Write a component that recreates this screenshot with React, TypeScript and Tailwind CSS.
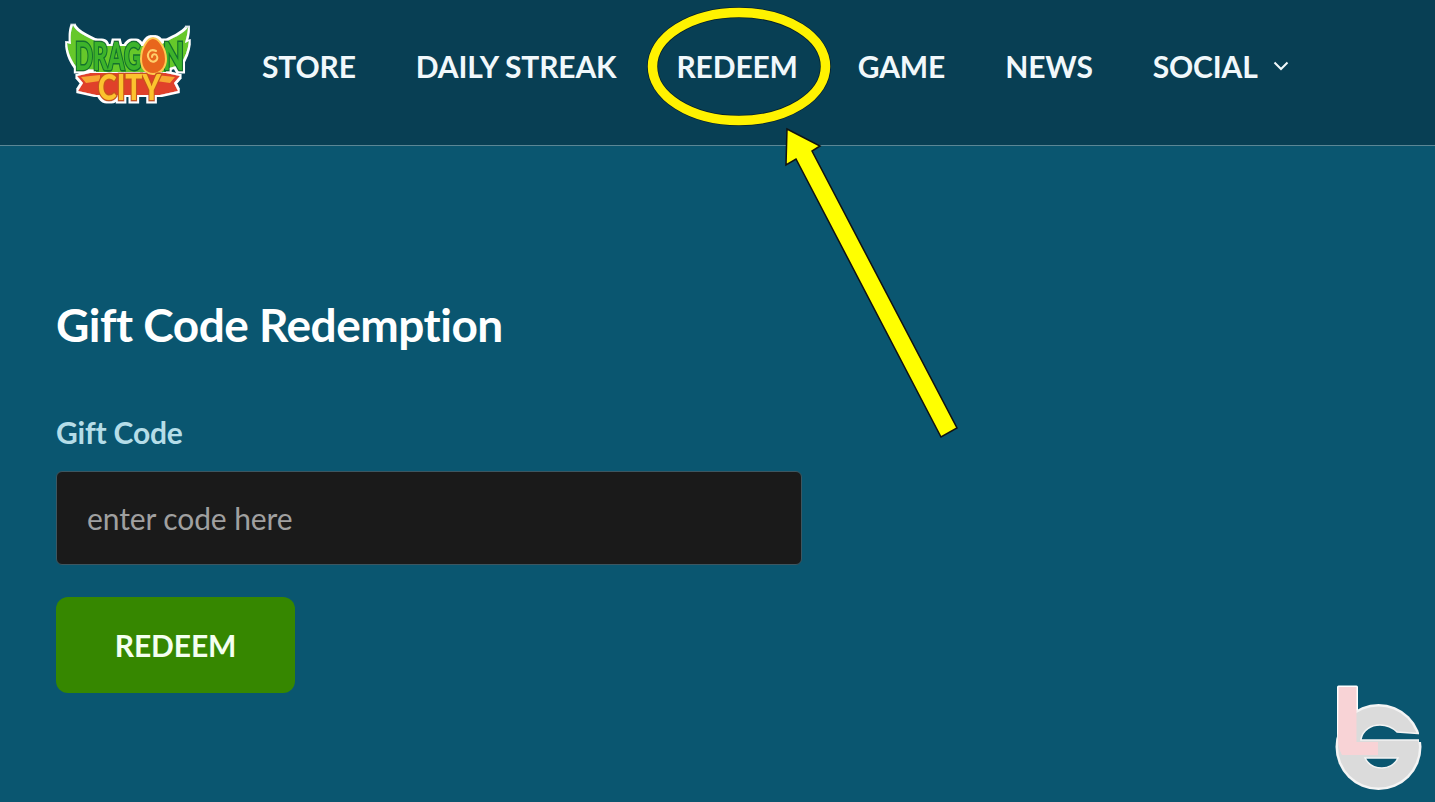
function Logo() {
  return (
    <svg width="132" height="90" viewBox="0 0 132 90" className="block blur-[0.4px]">
      <defs>
        {/* white sticker edge round the whole logo */}
        <filter id="edge" x="-10%" y="-10%" width="120%" height="120%">
          <feMorphology in="SourceAlpha" operator="dilate" radius="2.2" result="fat" />
          <feFlood floodColor="#ffffff" />
          <feComposite in2="fat" operator="in" result="outline" />
          <feMerge>
            <feMergeNode in="outline" />
            <feMergeNode in="SourceGraphic" />
          </feMerge>
        </filter>
      </defs>
      <g filter="url(#edge)">
        {/* wings */}
        <path d="M13 5 C16 13 30 18 42 24 L42 50 L18 49 C12 42 8 34 7 23 L11 24 C10 16 11 10 13 5Z" fill="#66c82a" />
        <path d="M128 7 C124 14 112 18 102 24 L102 50 L120 45 C125 38 128 30 129 21 L125 23 C127 16 128 11 128 7Z" fill="#66c82a" />
        <rect x="36" y="26" width="70" height="26" fill="#66c82a" />
        {/* DRAG + N, egg stands in for the O */}
        <text x="15" y="50" fontFamily="Lato, sans-serif" fontWeight="900" fontSize="37" fill="#3cb32a" stroke="#12702e" strokeWidth="3" paintOrder="stroke" textLength="66" lengthAdjust="spacingAndGlyphs">DRAG</text>
        <text x="103" y="50" fontFamily="Lato, sans-serif" fontWeight="900" fontSize="37" fill="#3cb32a" stroke="#12702e" strokeWidth="3" paintOrder="stroke" textLength="21" lengthAdjust="spacingAndGlyphs">N</text>
        {/* ribbon */}
        <path d="M30 53 L106 53 L120 56 L114 63 L118 71 L100 75 L36 75 L18 71 L23 63 L17 56Z" fill="#e0402a" />
        <path d="M21 57 L40 55 L40 61 L26 63Z M115 57 L96 55 L96 61 L110 63Z" fill="#f7a531" />
        {/* egg */}
        <path d="M93 54 C85 54 81 47 81 39 C81 29 87 18 93 18 C99 18 106 29 106 39 C106 47 101 54 93 54Z" fill="#e8661f" stroke="#ffc94f" strokeWidth="2" />
        <path d="M96 31 C90 28 86 34 89 39 C92 44 99 41 97 36 C96 33 92 34 92 37" fill="none" stroke="#ffcf6a" strokeWidth="2" strokeLinecap="round" />
        {/* CITY */}
        <text x="38" y="80" fontFamily="Lato, sans-serif" fontWeight="900" fontSize="36" fill="#fcc32e" stroke="#c8541c" strokeWidth="3" paintOrder="stroke" textLength="63" lengthAdjust="spacingAndGlyphs">CITY</text>
      </g>
    </svg>
  );
}

function Watermark() {
  return (
    <svg width="90" height="112" viewBox="0 0 90 112" className="block">
      <path d="M3.5 3 L21.5 3 L21.5 40 L3.5 55Z" fill="#f8d3d6" stroke="#fff" strokeWidth="3" strokeLinejoin="round" />
      <circle cx="43.5" cy="63" r="43" fill="#f4f4f4" />
      <circle cx="43.5" cy="63" r="40.5" fill="#dbdbdb" />
      {/* upper hole with the G's mouth */}
      <path d="M26 55 C28 46 36 41 45 41 C52 41 58 44 62 48 L90 50 L90 56 L26 56Z" fill="#0a5670" stroke="#f4f4f4" strokeWidth="1.5" />
      <rect x="84" y="47" width="6" height="11" fill="#0a5670" />
      <path d="M30 74 L63 74 C60 81 53 84 47 84 C39 84 33 80 30 74Z" fill="#0a5670" stroke="#f4f4f4" strokeWidth="1.5" />
      {/* pink L */}
      <path d="M3.5 3 L21.5 3 L21.5 58 L43 58 L43 71 L7 71 C4 66 3 60 3 55Z" fill="#f8d3d6" />
    </svg>
  );
}

const navItems = ["STORE", "DAILY STREAK", "REDEEM", "GAME", "NEWS"];

export default function App() {
  return (
    <div className="relative h-[802px] w-[1435px] overflow-hidden bg-[#0a5670] font-['Lato',sans-serif]">
      <header className="flex h-[146px] items-start border-b border-[#5b8795] bg-[#083f54] pl-[60px]">
        <div className="mt-[20px] w-[134px]">
          <Logo />
        </div>
        <nav className="ml-[68px] mt-[47px] flex items-center gap-[60px] text-[30px] leading-[38px] font-bold tracking-[-0.15px] text-[#f1f8fb]">
          {navItems.map((item) => (
            <span key={item}>{item}</span>
          ))}
          <span className="flex items-center gap-[15px]">
            SOCIAL
            <svg width="16" height="10" viewBox="0 0 16 10" fill="none" stroke="currentColor" strokeWidth="2">
              <path d="M1.5 1.5 L8 8 L14.5 1.5" />
            </svg>
          </span>
        </nav>
      </header>

      <main className="pl-[56px] pt-[150px]">
        <h1 className="text-[46px] leading-[58px] font-bold tracking-[-0.5px] text-white">Gift Code Redemption</h1>
        <label className="mt-[60px] block text-[30px] leading-[36px] font-bold tracking-[-0.2px] text-[#b5dde8]">Gift Code</label>
        <div className="mt-[21px] flex h-[94px] w-[746px] items-center rounded-md border border-[#3d5660] bg-[#1a1a1a] pl-[30px]">
          <span className="text-[30px] tracking-[-0.1px] text-[#a0a0a0]">enter code here</span>
        </div>
        <button className="mt-[32px] flex h-[96px] w-[239px] items-center justify-center rounded-xl bg-[#368700] text-[30px] font-bold tracking-[-0.1px] text-[#f4fff0]">
          REDEEM
        </button>
      </main>

      {/* annotation drawn over the screenshot */}
      <svg className="absolute left-0 top-0" width="1435" height="802" viewBox="0 0 1435 802" fill="none">
        <ellipse cx="739" cy="66.5" rx="86.5" ry="54" stroke="#000" strokeWidth="11" opacity="0.5" />
        <ellipse cx="739" cy="66.5" rx="86.5" ry="54" stroke="#fff200" strokeWidth="9.5" />
        <path d="M787 129 L820 146 L812 151 L957 428 L941 437 L796 159 L786 165 Z" fill="#ffff00" stroke="#111" strokeWidth="1.5" strokeLinejoin="miter" />
      </svg>

      <div className="absolute left-[1335px] top-[684px]">
        <Watermark />
      </div>
    </div>
  );
}
